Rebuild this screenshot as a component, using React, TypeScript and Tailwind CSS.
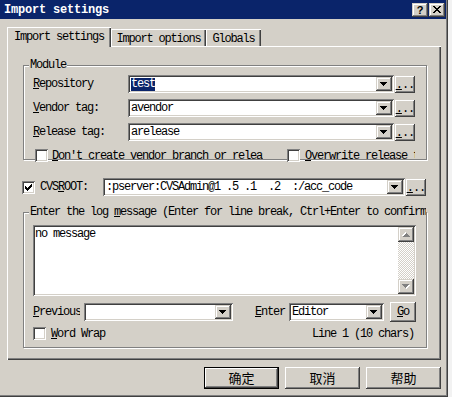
import React from 'react';

const raised =
  'shadow-[inset_-1px_-1px_0_#404040,inset_1px_1px_0_#ffffff,inset_-2px_-2px_0_#808080,inset_2px_2px_0_#d4d0c8]';
const raisedBtn =
  'shadow-[inset_-1px_-1px_0_#404040,inset_1px_1px_0_#d4d0c8,inset_-2px_-2px_0_#808080,inset_2px_2px_0_#ffffff]';
const sunken =
  'shadow-[inset_1px_1px_0_#808080,inset_-1px_-1px_0_#ffffff,inset_2px_2px_0_#404040,inset_-2px_-2px_0_#d4d0c8]';
const etched = 'border border-[#808080] shadow-[inset_1px_1px_0_#ffffff,1px_1px_0_#ffffff]';

const Arrow: React.FC<{ up?: boolean; grey?: boolean }> = ({ up, grey }) => (
  <svg width="8" height="5" viewBox="0 0 8 5" shapeRendering="crispEdges" className={up ? 'rotate-180' : ''}>
    {grey && <path d="M1 1h7v1h-1v1h-1v1h-1v1h-1v-1h-1v-1h-1v-1h-1z" fill="#ffffff" />}
    <path d="M0 0h7v1h-1v1h-1v1h-1v1h-1v-1h-1v-1h-1v-1h-1z" fill={grey ? '#808080' : '#000000'} />
  </svg>
);

const DropBtn: React.FC = () => (
  <div className={`w-[16px] h-full shrink-0 bg-[#d4d0c8] ${raisedBtn} flex items-center justify-center`}>
    <Arrow />
  </div>
);

const Combo: React.FC<{ className: string; children?: React.ReactNode }> = ({ className, children }) => (
  <div className={`flex h-[18px] shrink-0 bg-white p-[2px] ${sunken} ${className}`}>
    <div className="flex-1 flex items-center pl-[1px] overflow-hidden whitespace-pre">{children}</div>
    <DropBtn />
  </div>
);

const Dots: React.FC = () => (
  <div className={`w-[20px] h-[17px] shrink-0 bg-[#d4d0c8] ${raised} flex items-end justify-center pb-[3px]`}>
    <span className="leading-[10px] tracking-[-1px]">
      <span className="underline">.</span>..
    </span>
  </div>
);

const Check: React.FC<{ checked?: boolean }> = ({ checked }) => (
  <div className={`w-[13px] h-[13px] shrink-0 bg-white ${sunken} flex items-center justify-center`}>
    {checked && (
      <svg width="7" height="7" viewBox="0 0 7 7" shapeRendering="crispEdges">
        {[2, 3, 4, 3, 2, 1, 0].map((y, x) => (
          <rect key={x} x={x} y={y} width="1" height="3" fill="#000000" />
        ))}
      </svg>
    )}
  </div>
);

const Acc: React.FC<{ k: string; rest: string }> = ({ k, rest }) => (
  <span className="whitespace-pre">
    <span className="underline underline-offset-[1px]">{k}</span>
    {rest}
  </span>
);

const ModuleRow: React.FC<{ k: string; rest: string; value: React.ReactNode }> = ({ k, rest, value }) => (
  <div className="flex items-center h-[18px] gap-[1px]">
    <div className="w-[94px]">
      <Acc k={k} rest={rest} />
    </div>
    <Combo className="w-[266px]">{value}</Combo>
    <Dots />
  </div>
);

const PushBtn: React.FC<{ label: string; def?: boolean }> = ({ label, def }) => (
  <div
    className={`w-[75px] h-[22px] flex items-center justify-center bg-[#d4d0c8] font-['Noto_Sans_CJK_SC',sans-serif] text-[13px] tracking-normal ${
      def
        ? 'shadow-[inset_0_0_0_1px_#000000,inset_-2px_-2px_0_#404040,inset_2px_2px_0_#ffffff,inset_-3px_-3px_0_#808080]'
        : raised
    }`}
  >
    {label}
  </div>
);

export default function App() {
  return (
    <div className="flex w-[452px] h-[397px] bg-[#f2f2f2] font-['Liberation_Mono',monospace] text-[12px] leading-[12px] tracking-[-1.2px] text-black">
      <div className="w-[448px] h-[397px] shrink-0 border-r border-b border-[#404040]">
        <div className="h-full border-r border-b border-[#808080] bg-[#d4d0c8] flex flex-col">
          {/* title bar */}
          <div className="h-[19px] bg-[#0a246a] flex items-center pl-[4px] pr-[1px]">
            <span className="text-white font-bold text-[12px] tracking-[-0.2px]">Import settings</span>
            <div className="ml-auto flex gap-[1px]">
              <div className={`w-[16px] h-[14px] bg-[#d4d0c8] ${raisedBtn} flex items-center justify-center font-['Liberation_Sans',sans-serif] font-bold text-[11px] tracking-normal`}>
                ?
              </div>
              <div className={`w-[16px] h-[14px] bg-[#d4d0c8] ${raisedBtn} flex items-center justify-center`}>
                <svg width="8" height="7" viewBox="0 0 8 7" shapeRendering="crispEdges">
                  <path d="M0 0h2v1h1v1h2v-1h1v-1h2v1h-1v1h-1v1h-1v1h1v1h1v1h1v1h-2v-1h-1v-1h-2v1h-1v1h-2v-1h1v-1h1v-1h1v-1h-1v-1h-1v-1h-1z" fill="#000000" />
                </svg>
              </div>
            </div>
          </div>

          {/* tabs */}
          <div className="mt-[8px] h-[19px] flex items-end pl-[7px]">
            <div className="relative z-10 -mb-px w-[104px] h-[20px] bg-[#d4d0c8] flex items-center justify-center shadow-[inset_1px_1px_0_#ffffff,inset_-1px_0_0_#404040,inset_-2px_0_0_#808080]">
              Import settings
            </div>
            <div className="w-[95px] h-[17px] pt-[2px] flex items-center justify-center shadow-[inset_1px_1px_0_#ffffff,inset_-1px_0_0_#404040,inset_-2px_0_0_#808080]">
              Import options
            </div>
            <div className="w-[55px] h-[17px] pt-[2px] flex items-center justify-center shadow-[inset_1px_1px_0_#ffffff,inset_-1px_0_0_#404040,inset_-2px_0_0_#808080]">
              Globals
            </div>
          </div>

          {/* tab page */}
          <div className="ml-[7px] w-[434px] h-[314px] flex flex-col shadow-[inset_1px_1px_0_#ffffff,inset_-1px_-1px_0_#404040,inset_-2px_-2px_0_#808080]">
            <fieldset className={`mt-[13px] ml-[16px] w-[404px] h-[101px] ${etched}`}>
              <legend className="ml-[5px] px-[1px] bg-[#d4d0c8]">Module</legend>
              <div className="mt-[4px] ml-[9px] flex flex-col gap-[6px]">
                <ModuleRow
                  k="R"
                  rest="epository"
                  value={<span className="bg-[#0a246a] text-white leading-[13px]">test</span>}
                />
                <ModuleRow k="V" rest="endor tag:" value="avendor" />
                <ModuleRow k="R" rest="elease tag:" value="arelease" />
              </div>
              <div className="mt-[8px] ml-[11px] flex items-center">
                <Check />
                <div className="ml-[4px] w-[211px] overflow-hidden whitespace-nowrap">
                  <Acc k="D" rest="on't create vendor branch or release" />
                </div>
                <div className="ml-[24px]">
                  <Check />
                </div>
                <div className="ml-[5px] w-[110px] overflow-hidden whitespace-nowrap">
                  <Acc k="O" rest="verwrite release tags" />
                </div>
              </div>
            </fieldset>

            <div className="mt-[18px] ml-[15px] flex items-center h-[18px]">
              <Check checked />
              <div className="ml-[5px] w-[63px] whitespace-pre">
                CVS<span className="underline underline-offset-[1px]">R</span>OOT:
              </div>
              <Combo className="w-[302px]">:pserver:CVSAdmin@1 .5 .1  .2  :/acc_code</Combo>
              <div className="ml-[1px]">
                <Dots />
              </div>
            </div>

            <fieldset className={`mt-[10px] ml-[16px] w-[404px] h-[142px] ${etched}`}>
              <legend className="ml-[5px] px-[1px] bg-[#d4d0c8] max-w-[397px] overflow-hidden whitespace-nowrap">
                Enter the log <span className="underline underline-offset-[1px]">m</span>essage (Enter for line
                break, Ctrl+Enter to confirm)
              </legend>
              <div className={`mt-[7px] ml-[9px] w-[383px] h-[71px] bg-white p-[2px] ${sunken} flex`}>
                <div className="flex-1 pt-[1px]">no message</div>
                <div className="w-[16px] flex flex-col">
                  <div className={`h-[15px] bg-[#d4d0c8] ${raisedBtn} flex items-center justify-center`}>
                    <Arrow up grey />
                  </div>
                  <div className="flex-1 bg-[image:repeating-conic-gradient(#d4d0c8_0_25%,#ffffff_0_50%)] bg-[length:2px_2px]" />
                  <div className={`h-[15px] bg-[#d4d0c8] ${raisedBtn} flex items-center justify-center`}>
                    <Arrow grey />
                  </div>
                </div>
              </div>

              <div className="mt-[6px] ml-[9px] h-[20px] flex items-center">
                <div className="w-[47px] mr-[4px] overflow-hidden whitespace-nowrap">
                  <Acc k="P" rest="revious" />
                </div>
                <Combo className="w-[149px]" />
                <div className="ml-[22px] w-[34px]">
                  <Acc k="E" rest="nter" />
                </div>
                <Combo className="w-[95px]">Editor</Combo>
                <div className={`ml-[6px] w-[26px] h-[20px] bg-[#d4d0c8] ${raised} flex items-center justify-center`}>
                  <Acc k="G" rest="o" />
                </div>
              </div>

              <div className="mt-[5px] ml-[9px] flex items-center">
                <Check />
                <div className="ml-[5px]">
                  <Acc k="W" rest="ord Wrap" />
                </div>
                <div className="ml-auto mr-[12px] whitespace-pre">Line 1 (10 chars)</div>
              </div>
            </fieldset>
          </div>

          {/* dialog buttons */}
          <div className="mt-[7px] pr-[5px] flex justify-end gap-[6px]">
            <PushBtn label="确定" def />
            <PushBtn label="取消" />
            <PushBtn label="帮助" />
          </div>
        </div>
      </div>
    </div>
  );
}
